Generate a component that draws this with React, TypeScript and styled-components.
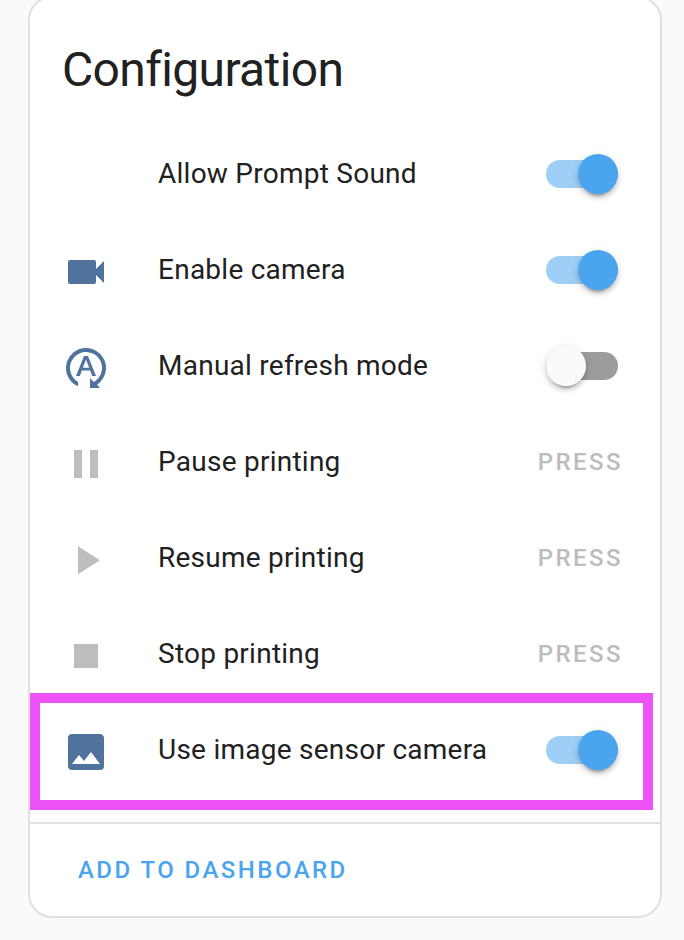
import React, { useState } from "react";
import styled, { createGlobalStyle } from "styled-components";

const GlobalStyle = createGlobalStyle`
  *, *::before, *::after { box-sizing: border-box; }
  html, body { margin: 0; background: #fafafa; }
  body { font-family: Roboto, "Liberation Sans", sans-serif; color: #212121; overflow: hidden; }
`;

const Page = styled.main`
  height: 940px;
  padding: 0 22px 22px 28px;
  overflow: hidden;
`;

const Card = styled.section`
  display: flex;
  flex-direction: column;
  height: 922px;
  margin-top: -4px;
  background: #fff;
  border: 2px solid #e0e0e0;
  border-radius: 24px;
`;

const Title = styled.h1`
  margin: 0;
  padding: 24px 32px 0;
  height: 136px;
  font-size: 48px;
  line-height: 96px;
  font-weight: 400;
  letter-spacing: -0.64px;
`;

const Rows = styled.div`
  display: flex;
  flex-direction: column;
  gap: 16px;
  height: 688px;
`;

const Row = styled.div`
  position: relative;
  display: flex;
  align-items: center;
  flex: 0 0 80px;
  padding: 0 37px 0 32px;
`;

const Highlight = styled.div`
  position: absolute;
  top: -17px;
  left: 0;
  width: 623px;
  height: 117px;
  border: 10px solid #ec52f7;
  pointer-events: none;
`;

const IconSlot = styled.span<{ $muted?: boolean }>`
  display: flex;
  flex: 0 0 48px;
  height: 48px;
  margin: 4px 48px 0 0;
  color: ${(p) => (p.$muted ? "#bdbdbd" : "#4f739c")};
`;

const Label = styled.span`
  flex: 1;
  font-size: 28px;
  line-height: 40px;
  letter-spacing: 0.25px;
  white-space: nowrap;
`;

const TextButton = styled.button<{ $primary?: boolean }>`
  padding: 0;
  border: 0;
  background: none;
  font: 500 24px/40px Roboto, "Liberation Sans", sans-serif;
  letter-spacing: 2.45px;
  text-transform: uppercase;
  white-space: nowrap;
  color: ${(p) => (p.$primary ? "#4ba5ee" : "#bdbdbd")};
`;

const Track = styled.button<{ $on: boolean }>`
  display: flex;
  align-items: center;
  justify-content: ${(p) => (p.$on ? "flex-end" : "flex-start")};
  width: 72px;
  height: 28px;
  margin-right: 5px;
  padding: 0;
  border: 0;
  border-radius: 14px;
  background: ${(p) => (p.$on ? "#9ecff7" : "#9c9c9c")};
`;

const Thumb = styled.span<{ $on: boolean }>`
  flex: 0 0 40px;
  height: 40px;
  border-radius: 50%;
  background: ${(p) => (p.$on ? "#4ba5ee" : "#fafafa")};
  box-shadow: 0 6px 2px -4px rgba(0, 0, 0, 0.2), 0 4px 4px rgba(0, 0, 0, 0.14),
    0 2px 10px rgba(0, 0, 0, 0.12);
`;

const Footer = styled.footer`
  display: flex;
  align-items: center;
  height: 94px;
  padding: 0 48px;
  border-top: 2px solid #e0e0e0;
`;

const icons = {
  video: "M17,10.5V7A1,1 0 0,0 16,6H4A1,1 0 0,0 3,7V17A1,1 0 0,0 4,18H16A1,1 0 0,0 17,17V13.5L21,17.5V6.5L17,10.5Z",
  auto: "M14,22V17L15.9,18.99A8,8 0 1,0 8,18.93V21.17A10,10 0 1,1 17.55,20.32L19,22ZM11,6H13L17,16H15.1L14.1,13.3H9.9L8.9,16H7ZM10.4,11.9H13.6L12,7.7Z",
  pause: "M14,19H18V5H14M6,19H10V5H6V19Z",
  play: "M8,5.14V19.14L19,12.14L8,5.14Z",
  stop: "M18,18H6V6H18V18Z",
  image: "M8.5,13.5L11,16.5L14.5,12L19,18H5M21,19V5C21,3.89 20.1,3 19,3H5A2,2 0 0,0 3,5V19A2,2 0 0,0 5,21H19A2,2 0 0,0 21,19Z",
};

const Icon = ({ name }: { name: keyof typeof icons }) => (
  <svg width="48" height="48" viewBox="0 0 24 24" fill="currentColor" fillRule={name === "auto" ? "evenodd" : "nonzero"}>
    <path d={icons[name]} />
  </svg>
);

const Toggle = ({ label, initial }: { label: string; initial: boolean }) => {
  const [on, setOn] = useState(initial);
  return (
    <Track $on={on} role="switch" aria-checked={on} aria-label={label} onClick={() => setOn(!on)}>
      <Thumb $on={on} />
    </Track>
  );
};

type Entity = { label: string; icon?: keyof typeof icons; on?: boolean; highlight?: boolean };

const entities: Entity[] = [
  { label: "Allow Prompt Sound", on: true },
  { label: "Enable camera", icon: "video", on: true },
  { label: "Manual refresh mode", icon: "auto", on: false },
  { label: "Pause printing", icon: "pause" },
  { label: "Resume printing", icon: "play" },
  { label: "Stop printing", icon: "stop" },
  { label: "Use image sensor camera", icon: "image", on: true, highlight: true },
];

export default function App() {
  return (
    <Page>
      <GlobalStyle />
      <Card>
        <Title>Configuration</Title>
        <Rows>
          {entities.map(({ label, icon, on, highlight }) => (
            <Row key={label}>
              <IconSlot $muted={on === undefined}>{icon && <Icon name={icon} />}</IconSlot>
              <Label>{label}</Label>
              {on === undefined ? <TextButton>Press</TextButton> : <Toggle label={label} initial={on} />}
              {highlight && <Highlight />}
            </Row>
          ))}
        </Rows>
        <Footer>
          <TextButton $primary>Add to dashboard</TextButton>
        </Footer>
      </Card>
    </Page>
  );
}
